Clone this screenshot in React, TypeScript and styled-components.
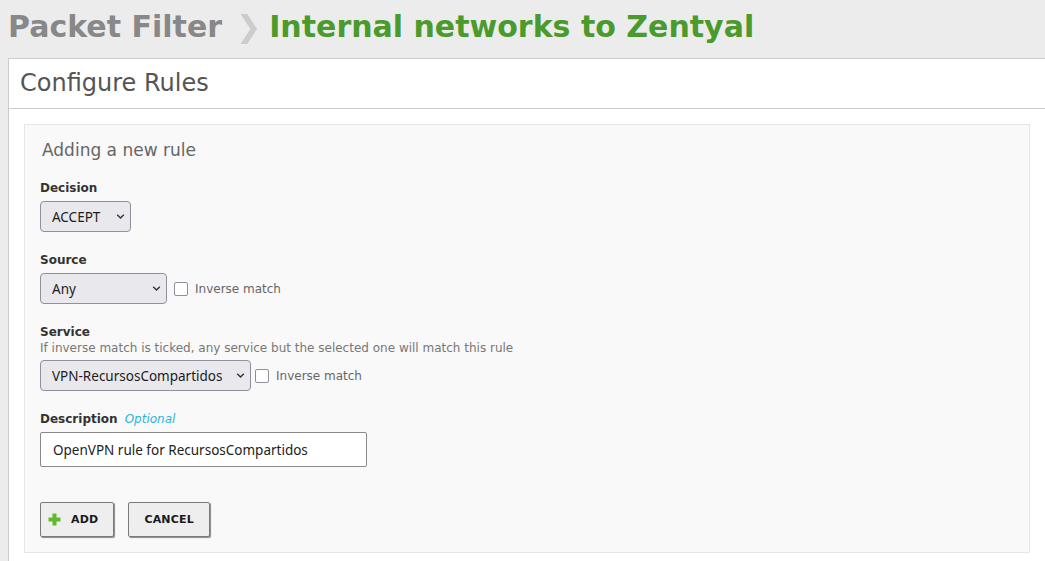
import React from 'react';
import styled, { createGlobalStyle } from 'styled-components';

const Global = createGlobalStyle`
  html, body { margin: 0; padding: 0; background: #ececec; }
  body { font-family: "DejaVu Sans", sans-serif; overflow: hidden; }
  * { box-sizing: border-box; }
`;

const Page = styled.div`
  width: 1045px;
  height: 561px;
  overflow: hidden;
  background: #ececec;
  display: flex;
  flex-direction: column;
`;

const Title = styled.h1`
  margin: 0;
  height: 58px;
  flex: none;
  padding: 9px 0 0 8px;
  font: bold 30px/36px "DejaVu Sans", sans-serif;
  white-space: nowrap;
  display: flex;
  align-items: baseline;
`;

const Crumb = styled.span<{ $current?: boolean }>`
  color: ${(p) => (p.$current ? '#4a9a2c' : '#888888')};
`;

const Sep = styled.span`
  color: #cccccc;
  margin: 0 8px 0 14px;
  font-weight: bold;
`;

const Panel = styled.section`
  flex: 1;
  margin-left: 8px;
  background: #ffffff;
  border: 1px solid #cccccc;
  border-right: none;
  border-bottom: none;
`;

const PanelHeader = styled.h2`
  margin: 0;
  height: 50px;
  padding-left: 11px;
  font: normal 24px/49px "DejaVu Sans", sans-serif;
  color: #555555;
  border-bottom: 1px solid #cccccc;
`;

const PanelBody = styled.div`
  padding: 15px 15px 0 15px;
`;

const FormBox = styled.div`
  background: #f9f9f9;
  border: 1px solid #e6e6e6;
  padding: 15px 15px 15px 15px;
`;

const FormHeading = styled.h3`
  margin: 0 0 19px 2px;
  font: normal 17px/21px "DejaVu Sans", sans-serif;
  color: #666666;
`;

const Field = styled.div<{ $gap?: number }>`
  margin-bottom: ${(p) => p.$gap ?? 20}px;
`;

const Label = styled.label`
  display: block;
  font: bold 12px/16px "DejaVu Sans", sans-serif;
  color: #333333;
  margin-bottom: 5px;
`;

const Optional = styled.span`
  font-weight: normal;
  font-style: italic;
  color: #2bb5d6;
  margin-left: 7px;
`;

const Help = styled.div`
  font: normal 12px/16px "DejaVu Sans", sans-serif;
  color: #777777;
  margin: -5px 0 4px;
`;

const Row = styled.div`
  display: flex;
  align-items: center;
`;

const SelectWrap = styled.div<{ $w: number }>`
  position: relative;
  width: ${(p) => p.$w}px;
  height: 31px;
  flex: none;
`;

const Select = styled.select`
  appearance: none;
  -webkit-appearance: none;
  width: 100%;
  height: 100%;
  margin: 0;
  padding: 0 0 0 11px;
  background: #e9e9ed;
  border: 1px solid #8f8f9d;
  border-radius: 4px;
  font: normal 13.5px "Noto Sans", sans-serif;
  color: #1c1b22;
  outline: none;
`;

const Chevron = styled.svg`
  position: absolute;
  right: 6px;
  top: 12px;
  width: 9px;
  height: 7px;
  pointer-events: none;
`;

const Check = styled.input<{ $gap?: number }>`
  appearance: none;
  -webkit-appearance: none;
  width: 14px;
  height: 14px;
  margin: 0 0 0 ${(p) => p.$gap ?? 7}px;
  background: #ffffff;
  border: 1.5px solid #8f8f9d;
  border-radius: 2px;
  flex: none;
`;

const CheckLabel = styled.span`
  margin-left: 7px;
  font: normal 12px/16px "DejaVu Sans", sans-serif;
  color: #666666;
`;

const TextInput = styled.input`
  width: 327px;
  height: 35px;
  margin: 0;
  padding: 0 0 0 12px;
  background: #ffffff;
  border: 1px solid #8a8a8a;
  border-radius: 2px;
  font: normal 13.5px "Noto Sans", sans-serif;
  color: #222222;
  outline: none;
`;

const Actions = styled.div`
  display: flex;
  gap: 14px;
`;

const Button = styled.button<{ $icon?: boolean }>`
  height: 35px;
  display: inline-flex;
  align-items: center;
  gap: 10px;
  padding: 0 15px 0 ${(p) => (p.$icon ? 7 : 15)}px;
  background: #eeeeee;
  border: 1px solid #7a7a7a;
  border-radius: 2px;
  box-shadow: 1px 1px 1px rgba(0, 0, 0, 0.45);
  font: bold 11px "DejaVu Sans", sans-serif;
  letter-spacing: 0.2px;
  color: #1a1a1a;
  cursor: pointer;
`;

const chevronSvg = (
  <Chevron viewBox="0 0 9 7">
    <path d="M1.2 1.8 L4.5 5 L7.8 1.8" fill="none" stroke="#333" strokeWidth="1.4" />
  </Chevron>
);

function Dropdown({ width, value }: { width: number; value: string }) {
  return (
    <SelectWrap $w={width}>
      <Select defaultValue={value}>
        <option>{value}</option>
      </Select>
      {chevronSvg}
    </SelectWrap>
  );
}

export default function App() {
  return (
    <Page>
      <Global />
      <Title>
        <Crumb>Packet Filter</Crumb>
        <Sep>❯</Sep>
        <Crumb $current>Internal networks to Zentyal</Crumb>
      </Title>
      <Panel>
        <PanelHeader>Configure Rules</PanelHeader>
        <PanelBody>
          <FormBox>
            <FormHeading>Adding a new rule</FormHeading>
            <Field>
              <Label>Decision</Label>
              <Dropdown width={91} value="ACCEPT" />
            </Field>
            <Field>
              <Label>Source</Label>
              <Row>
                <Dropdown width={127} value="Any" />
                <Check type="checkbox" />
                <CheckLabel>Inverse match</CheckLabel>
              </Row>
            </Field>
            <Field>
              <Label>Service</Label>
              <Help>If inverse match is ticked, any service but the selected one will match this rule</Help>
              <Row>
                <Dropdown width={211} value="VPN-RecursosCompartidos" />
                <Check type="checkbox" $gap={4} />
                <CheckLabel>Inverse match</CheckLabel>
              </Row>
            </Field>
            <Field $gap={35}>
              <Label>
                Description<Optional>Optional</Optional>
              </Label>
              <TextInput defaultValue="OpenVPN rule for RecursosCompartidos" />
            </Field>
            <Actions>
              <Button $icon>
                <svg width="13" height="13" viewBox="0 0 13 13">
                  <path d="M4.5 0.5h4v4h4v4h-4v4h-4v-4h-4v-4h4z" fill="#62b92b" />
                </svg>
                ADD
              </Button>
              <Button>CANCEL</Button>
            </Actions>
          </FormBox>
        </PanelBody>
      </Panel>
    </Page>
  );
}
